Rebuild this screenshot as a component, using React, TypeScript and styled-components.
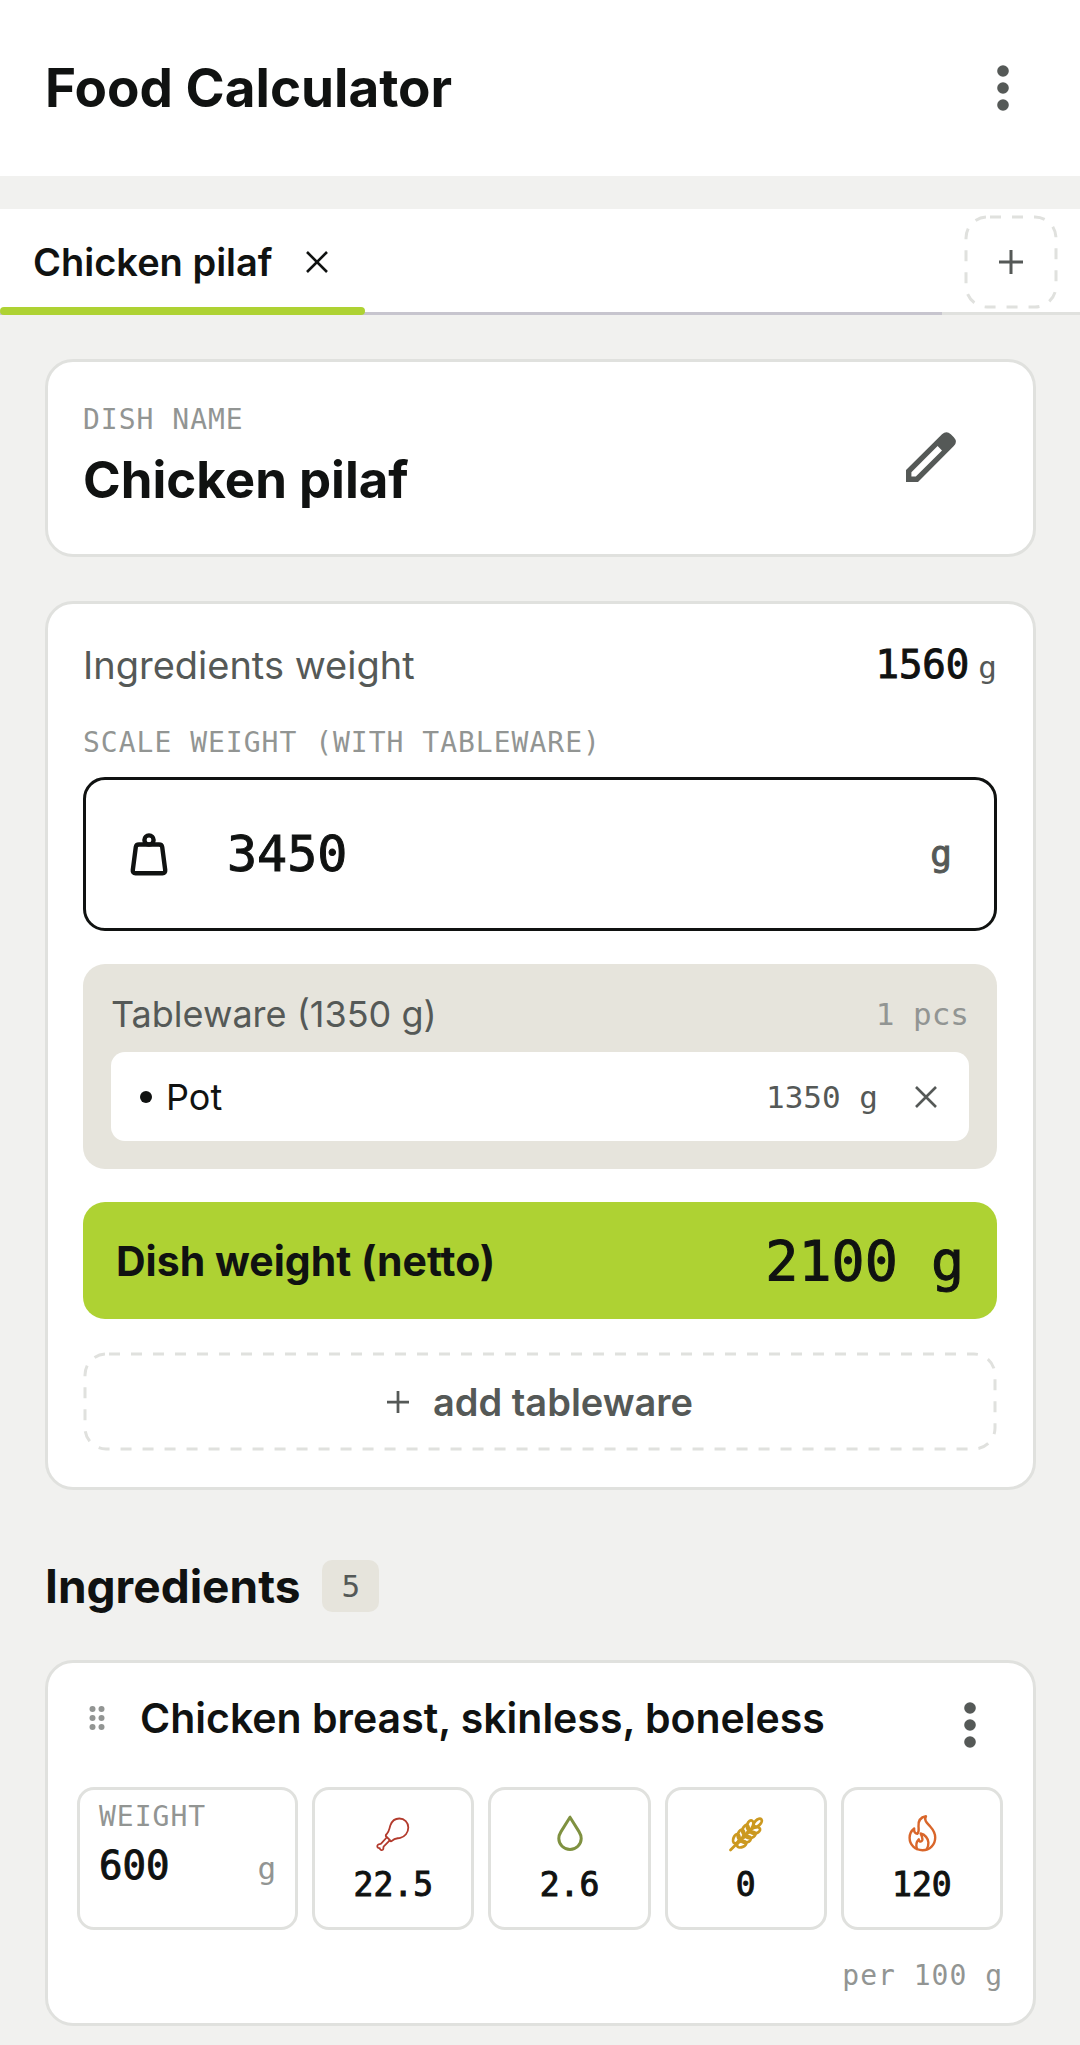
import React, { useState } from "react";
import styled, { createGlobalStyle, css } from "styled-components";

const color = {
  ink: "#101211",
  body: "#555957",
  muted: "#929593",
  line: "#e0e1de",
  page: "#f1f1ef",
  sand: "#e6e4dc",
  lime: "#aed233",
  white: "#ffffff",
};

const mono = css`
  font-family: "DejaVu Sans Mono", "Liberation Mono", monospace;
`;

/* The mono face has no medium cut, so figures get a thin outline instead. */
const figure = css`
  ${mono}
  font-weight: 400;
  -webkit-text-stroke: 1px currentColor;
`;

const GlobalStyle = createGlobalStyle`
  *, *::before, *::after { box-sizing: border-box; }
  body {
    margin: 0;
    background: ${color.page};
    color: ${color.ink};
    font-family: Inter, "Liberation Sans", sans-serif;
  }
  h1, h2, h3, p, ul { margin: 0; padding: 0; }
  button, input { font: inherit; color: inherit; }
  svg { display: block; flex: none; }
`;

const Header = styled.header`
  display: flex;
  align-items: center;
  justify-content: space-between;
  height: 176px;
  padding: 0 45px;
  background: ${color.white};
`;

const AppTitle = styled.h1`
  font-size: 53px;
  line-height: 64px;
  font-weight: 700;
`;

const IconButton = styled.button<{ $width: number; $height?: number; $tone?: string }>`
  display: flex;
  align-items: center;
  justify-content: center;
  flex: none;
  width: ${(p) => p.$width}px;
  height: ${(p) => p.$height ?? p.$width}px;
  padding: 0;
  border: 0;
  background: none;
  color: ${(p) => p.$tone ?? color.body};
  cursor: pointer;
`;

const TabBar = styled.nav`
  display: flex;
  height: 106px;
  margin-top: 33px;
  background: ${color.white};
`;

const TabTrack = styled.div`
  display: flex;
  flex: 1;
  border-bottom: 3px solid #c7c5ce;
`;

const Tab = styled.div`
  position: relative;
  display: flex;
  align-items: center;
  gap: 24px;
  height: 106px;
  padding: 0 28px 0 33px;

  &::after {
    content: "";
    position: absolute;
    left: 0;
    right: 0;
    bottom: 0;
    height: 8px;
    border-radius: 4px;
    background: ${color.lime};
  }
`;

const TabLabel = styled.button`
  padding: 0;
  border: 0;
  background: none;
  font-size: 38px;
  line-height: 48px;
  font-weight: 600;
  white-space: nowrap;
`;

const TabActions = styled.div`
  display: flex;
  padding: 6px 22px 0;
  border-bottom: 3px solid ${color.line};
`;

const AddTabButton = styled.button`
  position: relative;
  display: flex;
  align-items: center;
  justify-content: center;
  width: 94px;
  height: 94px;
  padding: 0;
  border: 0;
  background: none;
  color: ${color.body};
`;

const DashSvg = styled.svg`
  position: absolute;
  inset: 0;
  width: 100%;
  height: 100%;

  rect {
    x: 2px;
    y: 2px;
    width: calc(100% - 4px);
    height: calc(100% - 4px);
    fill: none;
    stroke: ${color.line};
    stroke-width: 3px;
    stroke-dasharray: 11px 11px;
    stroke-dashoffset: -3px;
  }
`;

const Main = styled.main`
  display: flex;
  flex-direction: column;
  padding: 44px 44px 18px 45px;
`;

const Card = styled.section`
  border: 3px solid ${color.line};
  border-radius: 28px;
  background: ${color.white};
`;

const DishCard = styled(Card)`
  display: flex;
  align-items: center;
  justify-content: space-between;
  padding: 40px 70px 42px 35px;
`;

const Caption = styled.span`
  ${mono}
  display: block;
  font-size: 28px;
  line-height: 36px;
  letter-spacing: 1px;
  color: ${color.muted};
  text-transform: uppercase;
  white-space: nowrap;
`;

const DishTitle = styled.h2`
  padding-top: 10px;
  font-size: 51px;
  line-height: 64px;
  font-weight: 700;
`;

const WeightCard = styled(Card)`
  display: flex;
  flex-direction: column;
  margin-top: 44px;
  padding: 37px 36px 36px 35px;
`;

const Row = styled.div<{ $align?: string }>`
  display: flex;
  align-items: ${(p) => p.$align ?? "center"};
  justify-content: space-between;
`;

const RowLabel = styled.span`
  font-size: 38px;
  line-height: 48px;
  color: ${color.body};
`;

const RowValue = styled.span`
  ${figure}
  display: flex;
  align-items: baseline;
  gap: 9px;
  font-size: 39px;
  line-height: 48px;
`;

const Unit = styled.span<{ $size?: number; $tone?: string; $strong?: boolean }>`
  ${mono}
  font-size: ${(p) => p.$size ?? 31}px;
  line-height: 40px;
  color: ${(p) => p.$tone ?? color.body};
  -webkit-text-stroke: ${(p) => (p.$strong ? "1px currentColor" : "0")};
`;

const ScaleLabel = styled.label`
  padding-top: 36px;
`;

const ScaleField = styled.div`
  display: flex;
  align-items: center;
  height: 154px;
  margin-top: 16px;
  padding: 0 42px 0 44px;
  border: 3px solid ${color.ink};
  border-radius: 22px;
`;

const ScaleInput = styled.input`
  ${figure}
  flex: 1;
  min-width: 0;
  height: 72px;
  padding: 0 0 0 59px;
  border: 0;
  outline: 0;
  background: none;
  font-size: 50px;
`;

const TablewarePanel = styled.div`
  margin-top: 33px;
  padding: 28px;
  border-radius: 22px;
  background: ${color.sand};
`;

const PanelLabel = styled.span`
  font-size: 36px;
  line-height: 44px;
  color: ${color.body};
`;

const TablewareList = styled.ul`
  margin-top: 16px;
  list-style: none;
`;

const TablewareItem = styled.li`
  display: flex;
  align-items: center;
  height: 89px;
  padding: 0 23px 0 29px;
  border-radius: 14px;
  background: ${color.white};
`;

const Bullet = styled.span`
  width: 12px;
  height: 12px;
  margin-right: 14px;
  border-radius: 50%;
  background: ${color.ink};
`;

const ItemName = styled.span`
  flex: 1;
  font-size: 36px;
  line-height: 44px;
`;

const ItemActions = styled.div`
  display: flex;
  align-items: center;
  gap: 28px;
`;

const NetRow = styled(Row)`
  height: 117px;
  margin-top: 33px;
  padding: 0 33px;
  border-radius: 22px;
  background: ${color.lime};
`;

const NetLabel = styled.span`
  font-size: 41px;
  line-height: 52px;
  font-weight: 700;
`;

const NetValue = styled.span`
  ${figure}
  font-size: 55px;
  line-height: 64px;
`;

const AddTableware = styled.button`
  position: relative;
  display: flex;
  align-items: center;
  justify-content: center;
  gap: 24px;
  height: 99px;
  margin-top: 33px;
  border: 0;
  background: none;
  color: ${color.body};
  font-size: 38px;
  line-height: 48px;
  font-weight: 600;
`;

const SectionHead = styled.div`
  display: flex;
  align-items: center;
  gap: 22px;
  margin-top: 70px;
`;

const SectionTitle = styled.h2`
  font-size: 46px;
  line-height: 52px;
  font-weight: 700;
`;

const CountBadge = styled.span`
  ${mono}
  padding: 0 19px;
  border-radius: 10px;
  background: ${color.sand};
  color: ${color.body};
  font-size: 31px;
  line-height: 52px;
`;

const IngredientCard = styled(Card)`
  margin-top: 48px;
  padding: 25px 30px 29px 29px;
`;

const IngredientHead = styled.div`
  display: flex;
  align-items: flex-start;
  padding: 0 19px 0 12px;
`;

const IngredientName = styled.h3`
  flex: 1;
  padding-left: 35px;
  font-size: 41px;
  line-height: 60px;
  font-weight: 600;
`;

const Cells = styled.div`
  display: grid;
  grid-template-columns: 221fr repeat(4, 162fr);
  gap: 14px;
  margin-top: 25px;
`;

const Cell = styled.div`
  display: flex;
  flex-direction: column;
  height: 143px;
  border: 3px solid ${color.line};
  border-radius: 17px;
`;

const WeightCell = styled(Cell)`
  padding: 9px 19px 0 19px;
`;

const MacroCell = styled(Cell)`
  align-items: center;
  padding-top: 23px;
`;

const WeightInput = styled.input`
  ${figure}
  flex: 1;
  width: 100%;
  min-width: 0;
  height: 60px;
  padding: 0;
  border: 0;
  outline: 0;
  background: none;
  font-size: 39px;
`;

const MacroInput = styled.input`
  ${figure}
  width: 100%;
  height: 44px;
  margin-top: 9px;
  padding: 0;
  border: 0;
  outline: 0;
  background: none;
  text-align: center;
  font-size: 33px;
`;

const Footnote = styled(Caption)`
  margin-top: 28px;
  text-align: right;
  text-transform: none;
`;

const DashedOutline = () => (
  <DashSvg aria-hidden="true">
    <rect rx="21" ry="21" />
  </DashSvg>
);

const MoreIcon = () => (
  <svg width="12" height="46" viewBox="0 0 12 46" fill="currentColor" aria-hidden="true">
    <circle cx="6" cy="6" r="5.8" />
    <circle cx="6" cy="23" r="5.8" />
    <circle cx="6" cy="40" r="5.8" />
  </svg>
);

const CloseIcon = () => (
  <svg width="22" height="22" viewBox="0 0 22 22" fill="none" stroke="currentColor" strokeWidth="2.6" aria-hidden="true">
    <path d="M1 1L21 21M21 1L1 21" />
  </svg>
);

const PlusIcon = ({ size }: { size: number }) => (
  <svg width={size} height={size} viewBox="0 0 24 24" fill="none" stroke="currentColor" strokeWidth="3" aria-hidden="true">
    <path d="M12 0V24M0 12H24" />
  </svg>
);

const PencilIcon = () => (
  <svg width="50" height="50" viewBox="0 0 50 50" aria-hidden="true">
    <path
      fill="currentColor"
      fillRule="evenodd"
      d="M0 50V38L36 2.200Q40.500 -1.800 44.800 2.200L47.800 5.200Q52 9.800 47.800 14L12 50ZM5.400 44.600H9.800L36 18.400L31.600 14L5.400 40.200Z"
    />
  </svg>
);

const WeightIcon = () => (
  <svg width="38" height="44" viewBox="0 0 38 44" fill="none" stroke="currentColor" strokeWidth="4.4" strokeLinejoin="round" aria-hidden="true">
    <circle cx="19" cy="8" r="4.600" />
    <path d="M9 12.500H29Q31.800 12.500 32.200 15L35.200 38Q35.500 41.300 32.500 41.300H5.500Q2.500 41.300 2.800 38L5.800 15Q6.200 12.500 9 12.500Z" />
  </svg>
);

const GripIcon = () => (
  <svg width="16" height="26" viewBox="0 0 16 26" fill={color.muted} aria-hidden="true">
    {[3.5, 12.500].map((cx) =>
      [4, 13, 22].map((cy) => <circle key={`${cx}-${cy}`} cx={cx} cy={cy} r="3" />)
    )}
  </svg>
);

const MacroSvg = ({ stroke, width, children }: { stroke: string; width: number; children: React.ReactNode }) => (
  <svg
    width="40"
    height="40"
    viewBox="0 0 40 40"
    fill="none"
    stroke={stroke}
    strokeWidth={width}
    strokeLinecap="round"
    strokeLinejoin="round"
    aria-hidden="true"
  >
    {children}
  </svg>
);

const ProteinIcon = () => (
  <MacroSvg stroke="#b23a2c" width={1.8}>
    <path d="M13.200 23.500C12.600 22.800 12.600 22 13.500 21.300C16.500 18.500 16.200 15.500 17.400 12.300C18.900 8.200 22.300 5.500 26.300 5.500C31.500 5.500 35.300 9.500 35.300 14.500C35.300 19.800 31.800 23.800 27.300 24.800C23.500 25.600 21.500 25.200 19.200 27.600C18.300 28.500 17.400 28.300 16.800 27.700L16.400 27.300" />
    <path d="M13.200 23.500L17 27.200L10.800 33.300C10 34.200 10.900 35.500 9.900 36.600C8.800 37.700 6.900 37 6.700 35.200C4.700 35.300 3.600 33.400 4.700 32C5.600 30.800 7.200 31.600 8.100 30.600L13.200 25" />
  </MacroSvg>
);

const FatIcon = () => (
  <MacroSvg stroke="#7f9140" width={3}>
    <path d="M20 4.200L11 18.600C9.500 21 8.800 23.200 8.800 25.500A11.200 11 0 0 0 31.200 25.500C31.200 23.200 30.500 21 29 18.600Z" />
  </MacroSvg>
);

const CarbIcon = () => (
  <MacroSvg stroke="#cc9920" width={2.8}>
    <g transform="translate(4.500 37) rotate(45)">
      <path d="M0 0V-34" />
      <ellipse cx="0" cy="-38.500" rx="2.800" ry="5" />
      {[-12, -18.500, -25, -31.500].map((y) => (
        <g key={y}>
          <ellipse cx="-3.800" cy={y} rx="2.900" ry="4.800" transform={`rotate(-24 -3.800 ${y})`} />
          <ellipse cx="3.800" cy={y} rx="2.900" ry="4.800" transform={`rotate(24 3.800 ${y})`} />
        </g>
      ))}
    </g>
  </MacroSvg>
);

const EnergyIcon = () => (
  <MacroSvg stroke="#d9662a" width={2.4}>
    <path d="M24 3.200C18.500 4.200 16 8 16.500 13.500C16.700 16.500 17.300 19 15.300 20.800C12.800 20.400 11.800 18.300 12.200 15.500C9.200 17.800 7.600 21 7.600 24.800C7.600 32 13.200 37.200 20.500 37.200C27.800 37.200 33.200 32 33.200 24.500C33.200 20 31.200 16.800 28.200 13.500C25.200 10.200 21.600 7.500 24 3.200Z" />
    <path d="M15 36C13.400 31.500 14.600 28.500 16.800 26.300C17 28 17.600 28.600 18.700 28.600C20.200 28.300 20.800 26.800 20.200 25C20 23.300 19.200 21.800 18.600 20.500C23 21.500 26.200 25.500 26.400 29.500C26.500 32 26 34 24.800 36" />
  </MacroSvg>
);

const macros = [
  { name: "Protein", value: "22.5", icon: <ProteinIcon /> },
  { name: "Fat", value: "2.6", icon: <FatIcon /> },
  { name: "Carbohydrates", value: "0", icon: <CarbIcon /> },
  { name: "Energy", value: "120", icon: <EnergyIcon /> },
];

export default function App() {
  const [scale, setScale] = useState("3450");
  const [weight, setWeight] = useState("600");

  return (
    <>
      <GlobalStyle />
      <Header>
        <AppTitle>Food Calculator</AppTitle>
        <IconButton $width={64} aria-label="Menu">
          <MoreIcon />
        </IconButton>
      </Header>

      <TabBar aria-label="Dishes">
        <TabTrack>
          <Tab>
            <TabLabel type="button">Chicken pilaf</TabLabel>
            <IconButton $width={40} $tone={color.ink} aria-label="Close tab">
              <CloseIcon />
            </IconButton>
          </Tab>
        </TabTrack>
        <TabActions>
          <AddTabButton type="button" aria-label="Add dish">
            <DashedOutline />
            <PlusIcon size={24} />
          </AddTabButton>
        </TabActions>
      </TabBar>

      <Main>
        <DishCard>
          <div>
            <Caption>Dish name</Caption>
            <DishTitle>Chicken pilaf</DishTitle>
          </div>
          <IconButton $width={64} aria-label="Rename dish">
            <PencilIcon />
          </IconButton>
        </DishCard>

        <WeightCard>
          <Row>
            <RowLabel>Ingredients weight</RowLabel>
            <RowValue>
              1560<Unit>g</Unit>
            </RowValue>
          </Row>

          <ScaleLabel htmlFor="scale-weight">
            <Caption>Scale weight (with tableware)</Caption>
          </ScaleLabel>
          <ScaleField>
            <WeightIcon />
            <ScaleInput
              id="scale-weight"
              inputMode="numeric"
              value={scale}
              onChange={(e) => setScale(e.target.value)}
            />
            <Unit $size={36} $strong>g</Unit>
          </ScaleField>

          <TablewarePanel>
            <Row>
              <PanelLabel>Tableware (1350 g)</PanelLabel>
              <Unit $tone={color.muted}>1 pcs</Unit>
            </Row>
            <TablewareList>
              <TablewareItem>
                <Bullet />
                <ItemName>Pot</ItemName>
                <ItemActions>
                  <Unit>1350 g</Unit>
                  <IconButton $width={40} aria-label="Remove Pot">
                    <CloseIcon />
                  </IconButton>
                </ItemActions>
              </TablewareItem>
            </TablewareList>
          </TablewarePanel>

          <NetRow>
            <NetLabel>Dish weight (netto)</NetLabel>
            <NetValue>2100 g</NetValue>
          </NetRow>

          <AddTableware type="button">
            <DashedOutline />
            <PlusIcon size={22} />
            add tableware
          </AddTableware>
        </WeightCard>

        <SectionHead>
          <SectionTitle>Ingredients</SectionTitle>
          <CountBadge>5</CountBadge>
        </SectionHead>

        <IngredientCard>
          <IngredientHead>
            <IconButton $width={16} $height={60} aria-label="Reorder ingredient">
              <GripIcon />
            </IconButton>
            <IngredientName>Chicken breast, skinless, boneless</IngredientName>
            <IconButton $width={28} $height={74} aria-label="Ingredient menu">
              <MoreIcon />
            </IconButton>
          </IngredientHead>
          <Cells>
            <WeightCell>
              <label htmlFor="ingredient-weight">
                <Caption>Weight</Caption>
              </label>
              <Row $align="baseline">
                <WeightInput
                  id="ingredient-weight"
                  inputMode="numeric"
                  value={weight}
                  onChange={(e) => setWeight(e.target.value)}
                />
                <Unit $tone={color.muted}>g</Unit>
              </Row>
            </WeightCell>
            {macros.map((m) => (
              <MacroCell key={m.name}>
                {m.icon}
                <MacroInput aria-label={m.name} inputMode="decimal" defaultValue={m.value} />
              </MacroCell>
            ))}
          </Cells>
          <Footnote>per 100 g</Footnote>
        </IngredientCard>
      </Main>
    </>
  );
}
